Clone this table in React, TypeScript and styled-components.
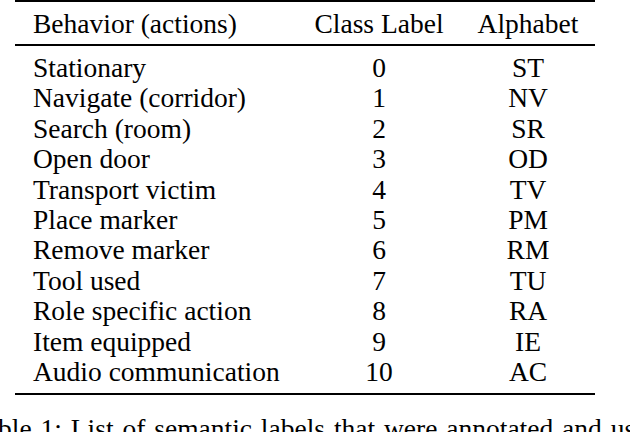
import React from "react";
import styled, { createGlobalStyle } from "styled-components";

const GlobalStyle = createGlobalStyle`
    html, body {
        margin: 0;
        padding: 0;
        background: #ffffff;
    }
    body {
        font-family: "Liberation Serif", "Times New Roman", serif;
        color: #000000;
        overflow: hidden;
    }
`;

const rows: [string, string, string][] = [
    ["Stationary", "0", "ST"],
    ["Navigate (corridor)", "1", "NV"],
    ["Search (room)", "2", "SR"],
    ["Open door", "3", "OD"],
    ["Transport victim", "4", "TV"],
    ["Place marker", "5", "PM"],
    ["Remove marker", "6", "RM"],
    ["Tool used", "7", "TU"],
    ["Role specific action", "8", "RA"],
    ["Item equipped", "9", "IE"],
    ["Audio communication", "10", "AC"],
];

export default function App() {
    return (
        <>
            <GlobalStyle />
            <Page>
                <Table>
                    <Rule $weight={2} />
                    <Head>
                        <Row>
                            <Cell>Behavior (actions)</Cell>
                            <Cell $center>Class Label</Cell>
                            <Cell $center>Alphabet</Cell>
                        </Row>
                    </Head>
                    <Rule $weight={1.3} />
                    <Body>
                        {rows.map(([behavior, label, alpha]) => (
                            <Row key={alpha}>
                                <Cell>{behavior}</Cell>
                                <Cell $center>{label}</Cell>
                                <Cell $center>{alpha}</Cell>
                            </Row>
                        ))}
                    </Body>
                    <Rule $weight={2} />
                </Table>
                {/* caption runs past the crop, only its top shows */}
                <Caption>Table 1: List of semantic labels that were annotated and used for</Caption>
            </Page>
        </>
    );
}

const Page = styled.div`
    width: 630px;
    height: 432px;
    overflow: hidden;
    display: flex;
    flex-direction: column;
`;

const Table = styled.div`
    margin-left: 15px;
    width: 580px;
    display: flex;
    flex-direction: column;
`;

const Rule = styled.div<{ $weight: number }>`
    height: ${({ $weight }) => $weight}px;
    background: #000000;
`;

const Head = styled.div`
    padding: 7px 0 5px;
`;

const Body = styled.div`
    padding: 7.3px 0 6px;
`;

const Row = styled.div`
    display: grid;
    grid-template-columns: 282px 164px 134px;
    font-size: 27.5px;
    line-height: 30.4px;
`;

const Cell = styled.div<{ $center?: boolean }>`
    white-space: nowrap;
    text-align: ${({ $center }) => ($center ? "center" : "left")};
    padding-left: ${({ $center }) => ($center ? "0" : "18px")};
`;

const Caption = styled.div`
    flex-shrink: 0;
    margin-top: 19px;
    margin-left: -29px;
    font-size: 27.5px;
    line-height: 30.4px;
    white-space: nowrap;
    word-spacing: 2px;
`;
